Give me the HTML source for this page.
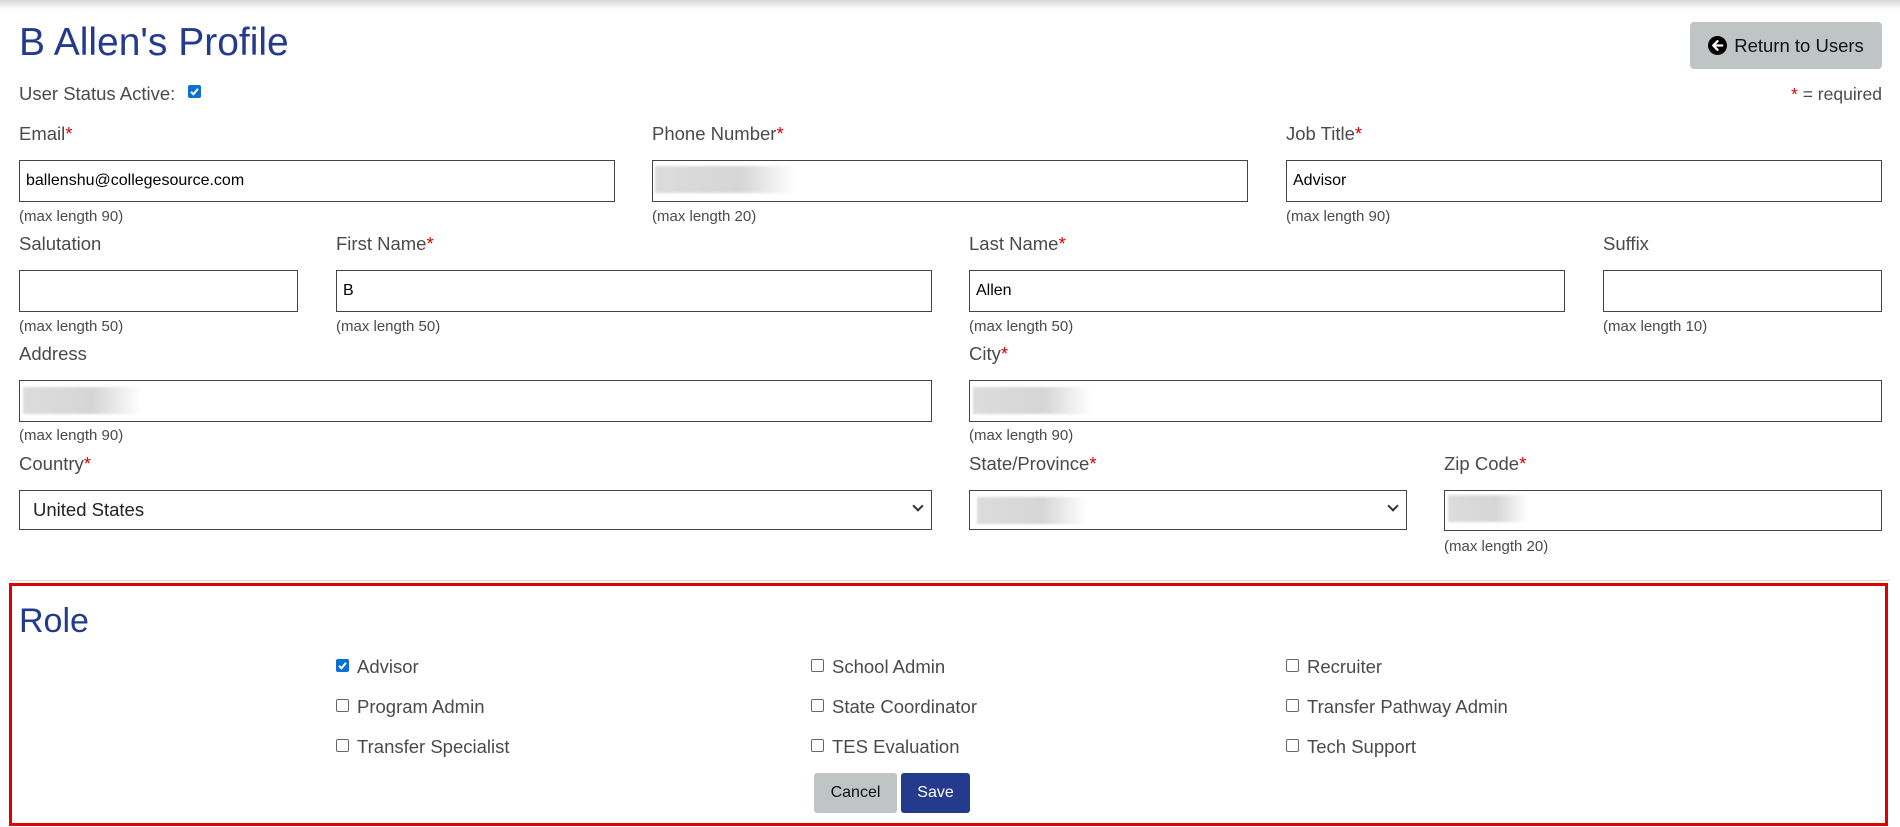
<!DOCTYPE html>
<html><head><meta charset="utf-8"><style>
*{box-sizing:border-box;margin:0;padding:0}
body{width:1900px;height:827px;background:#fff;font-family:"Liberation Sans",Arial,sans-serif;color:#4a4a4a;position:relative;overflow:hidden}
.a{position:absolute;white-space:nowrap}
.shadow{position:absolute;left:0;top:0;width:1900px;height:10px;background:linear-gradient(#d8d8d8,rgba(255,255,255,0))}
h1{position:absolute;left:19px;top:21px;font-size:39px;font-weight:normal;color:#243a8c}
.lbl{position:absolute;font-size:18.5px;color:#4a4a4a;line-height:20px;white-space:nowrap}
.lbl b{color:#d00;font-weight:normal}
.inp{position:absolute;border:1.5px solid #444;background:#fff;font-family:"Liberation Sans",Arial,sans-serif;font-size:16px;color:#000;padding-left:6px;display:flex;align-items:center}
.ml{position:absolute;font-size:15px;color:#4a4a4a;line-height:16px;white-space:nowrap}
.blur{position:absolute;background:linear-gradient(90deg,#dcdcdc 0%,#d6d6d6 60%,#fff 100%);filter:blur(1px)}
.chev{position:absolute;width:8px;height:8px;border-right:2px solid #333;border-bottom:2px solid #333;transform:rotate(45deg)}
.cb{position:absolute;width:13px;height:13px;border:1px solid #666;border-radius:2px;background:#fff}
.cb.on{background:#0b6fd6;border-color:#0b6fd6}
.role{position:absolute;font-size:18.5px;color:#4a4a4a;line-height:20px;white-space:nowrap}
</style></head><body>
<div class="shadow"></div>
<h1>B Allen's Profile</h1>
<div class="a" style="left:1690px;top:22px;width:192px;height:47px;background:#bfc4c4;border-radius:4px;font-size:18.5px;color:#111;display:flex;align-items:center;justify-content:center;gap:7px">
<svg width="19" height="19" viewBox="0 0 20 20"><circle cx="10" cy="10" r="10" fill="#000"/><path d="M15 10H6M10 5.5L5.5 10 10 14.5" stroke="#fff" stroke-width="2.4" fill="none" stroke-linecap="round" stroke-linejoin="round"/></svg>Return to Users</div>
<div class="lbl" style="left:19px;top:84px">User Status Active:</div>
<div class="cb on" style="left:188px;top:85px"><svg width="13" height="13" viewBox="0 0 13 13" style="position:absolute;left:-1px;top:-1px"><path d="M3 6.8L5.4 9.3 10 3.8" stroke="#fff" stroke-width="2" fill="none"/></svg></div>
<div class="lbl" style="right:18px;top:84px;font-size:17.5px"><b style="color:#d00">*</b> = required</div>

<div class="lbl" style="left:19px;top:124px">Email<b>*</b></div>
<div class="lbl" style="left:652px;top:124px">Phone Number<b>*</b></div>
<div class="lbl" style="left:1286px;top:124px">Job Title<b>*</b></div>
<div class="inp" style="left:19px;top:160px;width:596px;height:42px">ballenshu@collegesource.com</div>
<div class="inp" style="left:652px;top:160px;width:596px;height:42px"></div>
<div class="blur" style="left:655px;top:166px;width:141px;height:27px"></div>
<div class="inp" style="left:1286px;top:160px;width:596px;height:42px">Advisor</div>
<div class="ml" style="left:19px;top:209px">(max length 90)</div>
<div class="ml" style="left:652px;top:209px">(max length 20)</div>
<div class="ml" style="left:1286px;top:209px">(max length 90)</div>

<div class="lbl" style="left:19px;top:234px">Salutation</div>
<div class="lbl" style="left:336px;top:234px">First Name<b>*</b></div>
<div class="lbl" style="left:969px;top:234px">Last Name<b>*</b></div>
<div class="lbl" style="left:1603px;top:234px">Suffix</div>
<div class="inp" style="left:19px;top:270px;width:279px;height:42px"></div>
<div class="inp" style="left:336px;top:270px;width:596px;height:42px">B</div>
<div class="inp" style="left:969px;top:270px;width:596px;height:42px">Allen</div>
<div class="inp" style="left:1603px;top:270px;width:279px;height:42px"></div>
<div class="ml" style="left:19px;top:319px">(max length 50)</div>
<div class="ml" style="left:336px;top:319px">(max length 50)</div>
<div class="ml" style="left:969px;top:319px">(max length 50)</div>
<div class="ml" style="left:1603px;top:319px">(max length 10)</div>

<div class="lbl" style="left:19px;top:344px">Address</div>
<div class="lbl" style="left:969px;top:344px">City<b>*</b></div>
<div class="inp" style="left:19px;top:380px;width:913px;height:42px"></div>
<div class="blur" style="left:23px;top:387px;width:118px;height:27px"></div>
<div class="inp" style="left:969px;top:380px;width:913px;height:42px"></div>
<div class="blur" style="left:973px;top:387px;width:118px;height:27px"></div>
<div class="ml" style="left:19px;top:428px">(max length 90)</div>
<div class="ml" style="left:969px;top:428px">(max length 90)</div>

<div class="lbl" style="left:19px;top:454px">Country<b>*</b></div>
<div class="lbl" style="left:969px;top:454px">State/Province<b>*</b></div>
<div class="lbl" style="left:1444px;top:454px">Zip Code<b>*</b></div>
<div class="inp" style="left:19px;top:490px;width:913px;height:40px;font-size:18.5px;color:#222;padding-left:13px">United States</div>
<div class="chev" style="left:914px;top:502px"></div>
<div class="inp" style="left:969px;top:490px;width:438px;height:40px"></div>
<div class="blur" style="left:977px;top:497px;width:109px;height:27px"></div>
<div class="chev" style="left:1389px;top:502px"></div>
<div class="inp" style="left:1444px;top:490px;width:438px;height:41px"></div>
<div class="blur" style="left:1448px;top:495px;width:80px;height:27px"></div>
<div class="ml" style="left:1444px;top:539px">(max length 20)</div>

<div class="a" style="left:10px;top:580px;width:1880px;height:1px;background:#ddd"></div>
<div class="a" style="left:9px;top:583px;width:1879px;height:243px;border:3px solid #e00000"></div>
<div class="a" style="left:19px;top:602px;font-size:34px;color:#243a8c">Role</div>

<div class="cb on" style="left:336px;top:659px"><svg width="13" height="13" viewBox="0 0 13 13" style="position:absolute;left:-1px;top:-1px"><path d="M3 6.8L5.4 9.3 10 3.8" stroke="#fff" stroke-width="2" fill="none"/></svg></div>
<div class="role" style="left:357px;top:657px">Advisor</div>
<div class="cb" style="left:811px;top:659px"></div><div class="role" style="left:832px;top:657px">School Admin</div>
<div class="cb" style="left:1286px;top:659px"></div><div class="role" style="left:1307px;top:657px">Recruiter</div>
<div class="cb" style="left:336px;top:699px"></div><div class="role" style="left:357px;top:697px">Program Admin</div>
<div class="cb" style="left:811px;top:699px"></div><div class="role" style="left:832px;top:697px">State Coordinator</div>
<div class="cb" style="left:1286px;top:699px"></div><div class="role" style="left:1307px;top:697px">Transfer Pathway Admin</div>
<div class="cb" style="left:336px;top:739px"></div><div class="role" style="left:357px;top:737px">Transfer Specialist</div>
<div class="cb" style="left:811px;top:739px"></div><div class="role" style="left:832px;top:737px">TES Evaluation</div>
<div class="cb" style="left:1286px;top:739px"></div><div class="role" style="left:1307px;top:737px">Tech Support</div>

<div class="a" style="left:814px;top:773px;width:83px;height:40px;background:#bfc4c4;border-radius:3px;color:#111;font-size:16px;display:flex;align-items:center;justify-content:center">Cancel</div>
<div class="a" style="left:901px;top:773px;width:69px;height:40px;background:#243a8c;border-radius:3px;color:#fff;font-size:16px;display:flex;align-items:center;justify-content:center">Save</div>
</body></html>
